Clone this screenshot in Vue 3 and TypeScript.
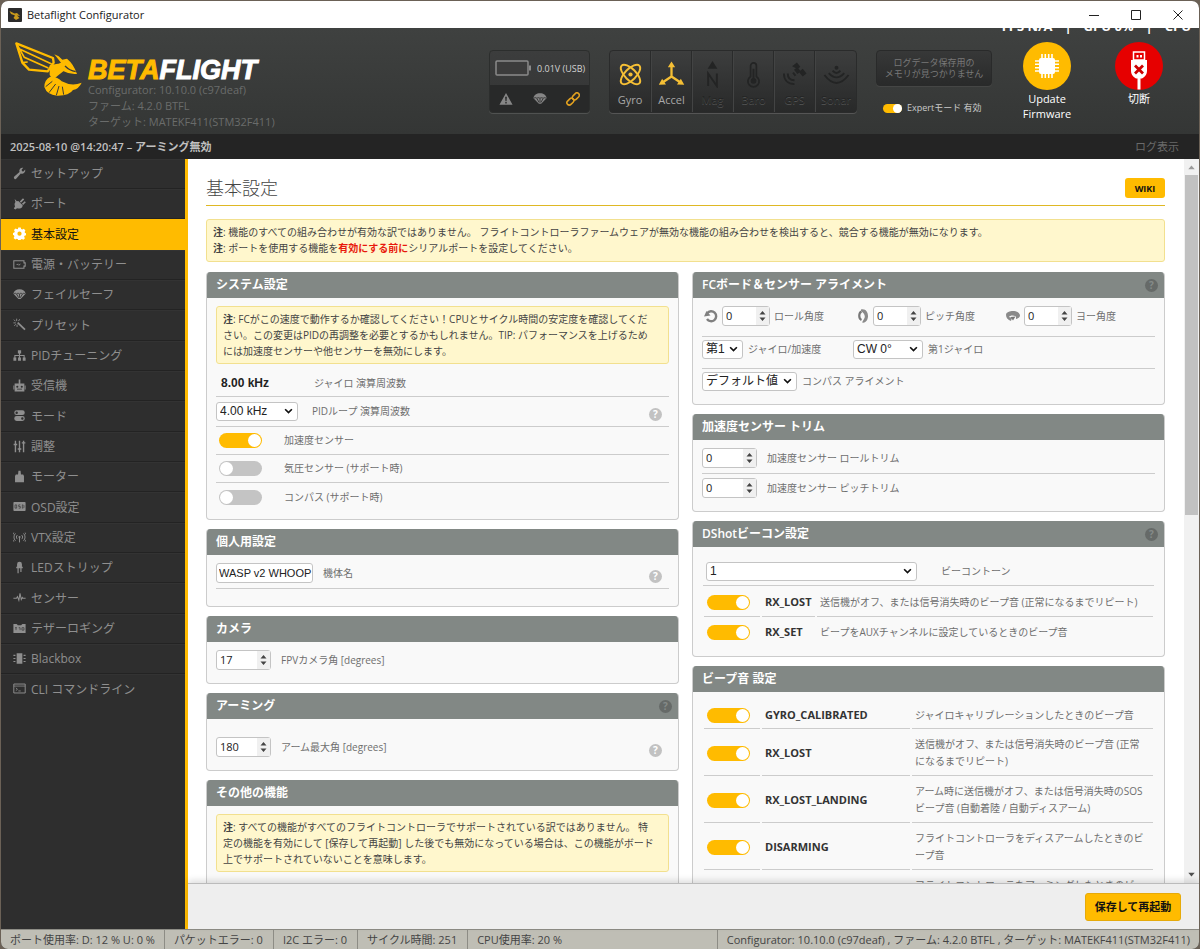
<script setup lang="ts">
import { ref } from 'vue'

interface NavItem { icon: string; label: string }
interface Sensor { icon: string; label: string; on: boolean }
interface Beeper { name: string; text: string }

const icons: Record<string, string> = {
  wrench: '<path d="M15 3.2a4 4 0 0 1-5.400 4.700L4.200 14.300a1.700 1.700 0 0 1-2.600-2.500L8 6.300A4 4 0 0 1 12.600 1L10.600 3.400l.5 1.700 1.700.4z"/>',
  plug: '<path d="M2 2.500l2.800 2.700 1.700-.4 5.500 5.200-.6 2.200c-1.600 2.200-4.400 2.600-6.400 1.500L3 15.500 1 14l1.600-2.500C1.500 9.500 1.800 7.500 3 6z"/><path d="M8.300 5.600l4-4 1.500 1.400-4 4zM11 8.300l3.400-3.200 1.400 1.500-3.400 3.200z"/>',
  gear: '<path fill-rule="evenodd" d="M6.500.5h3l.5 2 1.500.6L13.300 2l2 2.200-1 1.800.5 1.300 1.200.3v2.600l-1.800.5-.5 1.300 1 1.800-2 2-1.800-1-1.300.5-.6 1.700H6.500L6 15l-1.400-.5-1.800 1-2.100-2 1-1.900-.5-1.300-1.200-.4V7.300l1.600-.5.6-1.300-1-1.700 2-2 1.800 1L6 2.500zM8 5.600a2.600 2.600 0 1 0 0 5.200 2.600 2.600 0 0 0 0-5.200z"/>',
  battery: '<path d="M1 3.500h12.500v2.500h1.500v4h-1.500v2.500H1z" fill="none" stroke="currentColor" stroke-width="1.300"/><path d="M3.500 8.700l3-2v1.500l3.500-1.500-3 3V8.400z"/>',
  chute: '<path d="M.5 7C1 3.600 4 1.500 8 1.500S15 3.600 15.500 7L9.300 13.500H6.700z"/><path d="M4.500 7.500L7 12M8 7.500V12M11.500 7.500L9 12M1 7.200c1.200-1 2.500-1 3.500.2 1-1.200 2.300-1.200 3.500 0 1-1.200 2.500-1.200 3.500 0 1-1.200 2.500-1.200 3.500 0" fill="none" stroke="#2e2e2e" stroke-width="1"/>',
  wand: '<path d="M6.500 5L15.500 13.500 14 15 5 6.600z"/><path d="M4.500.8v3M8.200 1.500L6.800 3.800M1 2l2 2M.5 6h3M1.500 9.500l2-1.700M5 11V8" fill="none" stroke="currentColor" stroke-width="1.100"/>',
  tree: '<path d="M6 1.500h4v4H6zM.5 10.500H4v4H.500zM6.200 10.500h3.600v4H6.200zM12 10.500h3.500v4H12z"/><path d="M8 5v6M2.300 11V8h11.400v3" fill="none" stroke="currentColor" stroke-width="1.300"/>',
  radio: '<path fill-rule="evenodd" d="M2 5.500h5V.500h2v5h5v10H2zM4 9.500a1.300 1.300 0 1 0 2.600 0 1.300 1.300 0 0 0-2.600 0zm5.500 0a1.300 1.300 0 1 0 2.600 0 1.300 1.300 0 0 0-2.600 0zM5 13h6v-1H5zM.5 8H1.500v5H.500zM14.500 8h1v5h-1z"/>',
  modes: '<path fill-rule="evenodd" d="M4.500 1.500h7a3 3 0 0 1 0 6h-7a3 3 0 0 1 0-6zm0 1.500a1.500 1.500 0 1 0 0 3 1.500 1.500 0 0 0 0-3zM4.500 8.700h7a3 3 0 0 1 0 6h-7a3 3 0 0 1 0-6zm7 1.500a1.500 1.500 0 1 0 0 3 1.500 1.500 0 0 0 0-3z"/>',
  sliders: '<path d="M3 1v14M8 1v14M13 1v14M.8 5.500h4.400M5.800 11h4.400M10.800 3.500h4.400" fill="none" stroke="currentColor" stroke-width="1.700"/>',
  motor: '<path d="M6.700 1h2.600l.5 4.500h2.700l1 2V15h-11V7.500l1-2h2.700z"/>',
  osd: '<path d="M1.500 2.500h13a1 1 0 0 1 1 1v9a1 1 0 0 1-1 1h-13a1 1 0 0 1-1-1v-9a1 1 0 0 1 1-1z"/><path d="M2.500 6h2v4h-2zM9 6H7v2h2v2H7M11.500 6h1l1 1v2l-1 1h-1z" fill="none" stroke="#2e2e2e" stroke-width=".8"/>',
  vtx: '<circle cx="8" cy="7.500" r="1.300"/><path d="M8 8v6M5.500 10a3 3 0 0 1 0-5M10.500 10a3 3 0 0 0 0-5M3 12a6.500 6.500 0 0 1 0-9M13 12a6.500 6.500 0 0 0 0-9M1 13a9 9 0 0 1 0-11M15 13a9 9 0 0 0 0-11" fill="none" stroke="currentColor" stroke-width="1.200"/>',
  led: '<path d="M5 7V4a3 3 0 0 1 6 0v3h1v2H4V7zM5.500 9H7v6H5.500zM9 9h1.500v4.500H9z"/>',
  pulse: '<path d="M.5 9h3.700l1.300-2 1.700 4.500L8.600 3l1.600 7.500L11.500 8l.8 1h3.200" fill="none" stroke="currentColor" stroke-width="1.300"/>',
  tether: '<path d="M.5 2.500h4L6 4h4l1.500-1.500h4v11H.500z"/><path d="M2.500 7h2.300M3.700 7v3M7 7h1.700v3M11 7h2.500v3H11z" fill="none" stroke="#2e2e2e" stroke-width=".8"/>',
  chip: '<path d="M4.500 1.500h7v13h-7zM.5 3.500H3v1.400H.500zM.5 7.300H3v1.400H.500zM.5 11H3v1.400H.500zM13 3.500h2.500v1.400H13zM13 7.300h2.500v1.400H13zM13 11h2.500v1.400H13z"/>',
  cli: '<path d="M1 2.500h14v11H1z" fill="none" stroke="currentColor" stroke-width="1.200"/><path d="M1 5h14M3.500 7.200L5.500 9l-2 1.600M6.500 11h3" fill="none" stroke="currentColor" stroke-width="1"/>',
}

const sensorIcons: Record<string, string> = {
  gyro: '<g fill="none" stroke="currentColor" stroke-width="2"><ellipse cx="14" cy="14" rx="13" ry="5.800" transform="rotate(45 14 14)"/><ellipse cx="14" cy="14" rx="13" ry="5.800" transform="rotate(-45 14 14)"/></g><circle cx="14" cy="14" r="2.200"/>',
  accel: '<path d="M14 5v11M14 16L5 22M14 16l9 6" fill="none" stroke="currentColor" stroke-width="2.400"/><path d="M14 .5l3.800 6h-7.600zM.8 24.500l3.500-6 4 5.800zM27.200 24.500l-3.500-6-4 5.800z"/>',
  mag: '<path d="M14 0l5 8H9z"/><path d="M9.500 26V13l9 13V13" fill="none" stroke="currentColor" stroke-width="2"/>',
  baro: '<path d="M11 16V5a3 3 0 0 1 6 0v11a5.800 5.800 0 1 1-6 0z" fill="none" stroke="currentColor" stroke-width="1.800"/><circle cx="14" cy="20.500" r="3"/><path d="M13 8h2v12h-2z"/>',
  gps: '<path d="M11.500 5.500l5-4 3.500 4.500-2 1.700L20 10l2.500-2 4 5-4 3-3.500-4-2 1.600-3.500-4.500L15.500 7.500z"/><path d="M12.500 12l2.500 3.300M3 13c0 7 4.500 11 11 11M7 13c0 4.500 2.500 7 7 7" fill="none" stroke="currentColor" stroke-width="2"/>',
  sonar: '<path d="M1.500 14.500Q14 31 26.500 14.500M6 12.500q8 9 16 0M10 10q4 5 8 0" fill="none" stroke="currentColor" stroke-width="2"/><circle cx="14" cy="7" r="2"/>',
}

const nav: NavItem[] = [
  { icon: 'wrench', label: 'セットアップ' },
  { icon: 'plug', label: 'ポート' },
  { icon: 'gear', label: '基本設定' },
  { icon: 'battery', label: '電源・バッテリー' },
  { icon: 'chute', label: 'フェイルセーフ' },
  { icon: 'wand', label: 'プリセット' },
  { icon: 'tree', label: 'PIDチューニング' },
  { icon: 'radio', label: '受信機' },
  { icon: 'modes', label: 'モード' },
  { icon: 'sliders', label: '調整' },
  { icon: 'motor', label: 'モーター' },
  { icon: 'osd', label: 'OSD設定' },
  { icon: 'vtx', label: 'VTX設定' },
  { icon: 'led', label: 'LEDストリップ' },
  { icon: 'pulse', label: 'センサー' },
  { icon: 'tether', label: 'テザーロギング' },
  { icon: 'chip', label: 'Blackbox' },
  { icon: 'cli', label: 'CLI コマンドライン' },
]
const active = ref(2)

const sensors: Sensor[] = [
  { icon: 'gyro', label: 'Gyro', on: true },
  { icon: 'accel', label: 'Accel', on: true },
  { icon: 'mag', label: 'Mag', on: false },
  { icon: 'baro', label: 'Baro', on: false },
  { icon: 'gps', label: 'GPS', on: false },
  { icon: 'sonar', label: 'Sonar', on: false },
]

const expert = ref(true)
const features = ref([
  { id: 'acc', label: '加速度センサー', on: true },
  { id: 'baro', label: '気圧センサー (サポート時)', on: false },
  { id: 'mag', label: 'コンパス (サポート時)', on: false },
])
const craftName = ref('WASP v2 WHOOP')
const cameraAngle = ref(17)
const armAngle = ref(180)
const axes = ref([
  { id: 'roll', label: 'ロール角度', value: 0 },
  { id: 'pitch', label: 'ピッチ角度', value: 0 },
  { id: 'yaw', label: 'ヨー角度', value: 0 },
])
const trims = ref([
  { id: 'trim-roll', label: '加速度センサー ロールトリム', value: 0 },
  { id: 'trim-pitch', label: '加速度センサー ピッチトリム', value: 0 },
])
const dshot: Beeper[] = [
  { name: 'RX_LOST', text: '送信機がオフ、または信号消失時のビープ音 (正常になるまでリピート)' },
  { name: 'RX_SET', text: 'ビープをAUXチャンネルに設定しているときのビープ音' },
]
const beepers: Beeper[] = [
  { name: 'GYRO_CALIBRATED', text: 'ジャイロキャリブレーションしたときのビープ音' },
  { name: 'RX_LOST', text: '送信機がオフ、または信号消失時のビープ音 (正常になるまでリピート)' },
  { name: 'RX_LOST_LANDING', text: 'アーム時に送信機がオフ、または信号消失時のSOSビープ音 (自動着陸 / 自動ディスアーム)' },
  { name: 'DISARMING', text: 'フライトコントローラをディスアームしたときのビープ音' },
  { name: 'ARMING', text: 'フライトコントローラをアーミングしたときのビープ音' },
]
const stats = ['ポート使用率: D: 12 % U: 0 %', 'パケットエラー: 0', 'I2C エラー: 0', 'サイクル時間: 251', 'CPU使用率: 20 %']
</script>

<template>
  <div class="desktop">
    <div class="window">
      <header class="titlebar">
        <svg class="app-icon" viewBox="0 0 14 14"><rect width="14" height="14" rx="1" fill="#2b2b2b" /><path d="M1.500 3l5 2.500L9 5l3 3-3-.5 2.500 2.500L8 12l-2.500-2L7 7.500 3 6z" fill="#c99a1c" /></svg>
        <span class="app-title">Betaflight Configurator</span>
        <div class="win-buttons">
          <button aria-label="最小化"><svg viewBox="0 0 10 10"><path d="M0 5.500h10" /></svg></button>
          <button aria-label="最大化"><svg viewBox="0 0 10 10"><path d="M.5 .5h9v9h-9z" /></svg></button>
          <button aria-label="閉じる"><svg viewBox="0 0 10 10"><path d="M.5 .5l9 9M9.500 .5l-9 9" /></svg></button>
        </div>
      </header>

      <section class="topbar">
        <div class="overlay" aria-hidden="true"><span>FPS N/A</span><span>|</span><span>GPU 0%</span><span>|</span><span>CPU</span></div>
        <div class="brand">
          <svg class="bee" viewBox="0 0 210 165" fill="none">
            <path d="M4 4L22 62 42 83 98 88 116 62 114 48z" stroke="#ffbb00" stroke-width="7" stroke-linejoin="round" />
            <path d="M4 4L28 46 100 78M22 62l16-2M12 20L110 66" stroke="#ffbb00" stroke-width="5" />
            <path d="M104 70l24-5 14 10 4 12-18 14-14 12-10-14z" fill="#ffbb00" />
            <path d="M118 37q14 4 24 16l14-3q20 16 30 46-22 2-40-8-14-6-18-22l10-4z" fill="#ffbb00" />
            <path d="M150 72q14 14 32 17" stroke="#393b3a" stroke-width="4" />
            <path d="M106 104q24 0 34 14 30 16 60 4-8 18-26 22-12 18-48 17-30-2-38-26 0-22 18-31z" fill="#ffbb00" />
            <path d="M112 118l-20 16M122 126l-20 26M132 132l-8 28M142 134l4 24" stroke="#393b3a" stroke-width="3" />
          </svg>
          <div class="brand-text">
            <div class="wordmark"><span>BETA</span>FLIGHT</div>
            <div>Configurator: 10.10.0 (c97deaf)</div>
            <div>ファーム: 4.2.0 BTFL</div>
            <div>ターゲット: MATEKF411(STM32F411)</div>
          </div>
        </div>

        <div class="battery-box">
          <div class="battery-top">
            <svg viewBox="0 0 37 16" class="batt"><rect x="1" y="1" width="32" height="14" rx="1" fill="#3c3c3c" stroke="#8a8a8a" stroke-width="1.500" /><path d="M34 5.500h2v5h-2z" fill="#8a8a8a" /></svg>
            <span>0.01V (USB)</span>
          </div>
          <div class="battery-bottom">
            <svg viewBox="0 0 16 16" fill="#868686"><path fill-rule="evenodd" d="M8 1l7.500 13.500H.500zM7 5.500l.4 5h1.200l.4-5zM7.200 11.500V13h1.600v-1.500z" /></svg>
            <svg viewBox="0 0 16 16" class="grey" v-html="icons.chute"></svg>
            <svg viewBox="0 0 16 16" fill="none" stroke="#e0a020" stroke-width="1.800"><rect x="7" y="2.600" width="9" height="5.400" rx="2.700" transform="rotate(-45 11 5.500)" /><rect x="0.500" y="8.300" width="9" height="5.400" rx="2.700" transform="rotate(-45 5 11)" /></svg>
          </div>
        </div>

        <div class="sensors">
          <div v-for="s in sensors" :key="s.label" class="sensor" :class="{ on: s.on }">
            <svg viewBox="0 0 28 28" v-html="sensorIcons[s.icon]"></svg>
            <span>{{ s.label }}</span>
          </div>
        </div>

        <div class="flash">
          <div class="flash-box">ログデータ保存用の<br>メモリが見つかりません</div>
          <div class="expert">
            <input id="expert" v-model="expert" type="checkbox" class="toggle small">
            <label for="expert">Expertモード 有効</label>
          </div>
        </div>

        <div class="connect">
          <button class="round">
            <svg viewBox="0 0 48 48"><circle cx="24" cy="24" r="24" fill="#ffbb00" /><rect x="16" y="16" width="16" height="16" rx="2" fill="#fff" /><path d="M19 12v24M22.300 12v24M25.700 12v24M29 12v24M12 19h24M12 22.300h24M12 25.700h24M12 29h24" stroke="#fff" stroke-width="1.600" /></svg>
            <span>Update<br>Firmware</span>
          </button>
          <button class="round">
            <svg viewBox="0 0 48 48"><circle cx="24" cy="24" r="24" fill="#e60000" /><path d="M18.500 10h11v8h-11z" fill="#e60000" stroke="#fff" stroke-width="1.500" /><path d="M21.500 13h2v2.500h-2zM25 13h2v2.500h-2z" fill="#fff" /><path d="M16 18h16v11q0 5-5 7.500h-1.500V47.500h-3V36.500H21q-5-2.500-5-7.500z" fill="#fff" /><path d="M20 23.500l8 8M28 23.500l-8 8" stroke="#c00" stroke-width="2.800" /></svg>
            <span>切断</span>
          </button>
        </div>
      </section>

      <div class="logbar">
        <div>2025-08-10 @14:20:47 – <b>アーミング無効</b></div>
        <button>ログ表示</button>
      </div>

      <div class="main">
        <nav>
          <a v-for="(item, i) in nav" :key="item.label" href="#" :class="{ active: i === active }" @click.prevent="active = i">
            <svg viewBox="0 0 16 16" v-html="icons[item.icon]"></svg>
            <span>{{ item.label }}</span>
          </a>
        </nav>

        <div class="page">
          <div class="scroll-row">
            <div class="content">
              <div class="page-head">
                <h1>基本設定</h1>
                <button class="wiki">WIKI</button>
              </div>
              <div class="note">
                <div><b>注</b>: 機能のすべての組み合わせが有効な訳ではありません。 フライトコントローラファームウェアが無効な機能の組み合わせを検出すると、競合する機能が無効になります。</div>
                <div><b>注</b>: ポートを使用する機能を<strong>有効にする前に</strong>シリアルポートを設定してください。</div>
              </div>

              <div class="columns">
                <div class="column">
                  <section class="panel">
                    <h2>システム設定</h2>
                    <div class="body system">
                      <div class="note"><b>注</b>: FCがこの速度で動作するか確認してください！CPUとサイクル時間の安定度を確認してください。この変更はPIDの再調整を必要とするかもしれません。TIP: パフォーマンスを上げるためには加速度センサーや他センサーを無効にします。</div>
                      <div class="row gyro-row"><span class="freq">8.00 kHz</span><span>ジャイロ 演算周波数</span></div>
                      <div class="row pid-row">
                        <span class="select w82"><select id="pid"><option>4.00 kHz</option></select><svg viewBox="0 0 8 6"><path d="M1 1l3 3 3-3" /></svg></span>
                        <label for="pid">PIDループ 演算周波数</label>
                        <span class="help">?</span>
                      </div>
                      <div v-for="f in features" :key="f.id" class="row feature">
                        <input :id="f.id" v-model="f.on" type="checkbox" class="toggle">
                        <label :for="f.id">{{ f.label }}</label>
                      </div>
                    </div>
                  </section>

                  <section class="panel">
                    <h2>個人用設定</h2>
                    <div class="body personal">
                      <div class="row lined">
                        <input id="craft" v-model="craftName" type="text" class="text">
                        <label for="craft">機体名</label>
                        <span class="help">?</span>
                      </div>
                    </div>
                  </section>

                  <section class="panel">
                    <h2>カメラ</h2>
                    <div class="body plain">
                      <div class="row">
                        <span class="number"><input id="cam" v-model="cameraAngle" type="number"><svg viewBox="0 0 8 12"><path d="M4 1l3 3.500H1zM4 11l3-3.500H1z" /></svg></span>
                        <label for="cam">FPVカメラ角 [degrees]</label>
                      </div>
                    </div>
                  </section>

                  <section class="panel">
                    <h2>アーミング<span class="help dark">?</span></h2>
                    <div class="body plain arming">
                      <div class="row">
                        <span class="number"><input id="arm" v-model="armAngle" type="number"><svg viewBox="0 0 8 12"><path d="M4 1l3 3.500H1zM4 11l3-3.500H1z" /></svg></span>
                        <label for="arm">アーム最大角 [degrees]</label>
                        <span class="help">?</span>
                      </div>
                    </div>
                  </section>

                  <section class="panel">
                    <h2>その他の機能</h2>
                    <div class="body plain">
                      <div class="note"><b>注</b>: すべての機能がすべてのフライトコントローラでサポートされている訳ではありません。 特定の機能を有効にして [保存して再起動] した後でも無効になっている場合は、この機能がボード上でサポートされていないことを意味します。</div>
                      <div class="spacer"></div>
                    </div>
                  </section>
                </div>

                <div class="column">
                  <section class="panel">
                    <h2>FCボード＆センサー アライメント<span class="help dark">?</span></h2>
                    <div class="body plain">
                      <div class="thirds axes">
                        <div v-for="a in axes" :key="a.id" class="cell">
                          <svg v-if="a.id === 'roll'" class="axis" viewBox="0 0 14 14"><path d="M3.200 4.200A5 5 0 1 1 3 10" fill="none" stroke="#808080" stroke-width="2.400" /><path d="M0 7.500L2.500 2l4 4.500z" fill="#808080" /></svg>
                          <svg v-else-if="a.id === 'pitch'" class="axis" viewBox="0 0 14 14"><path d="M6 .5c5-1 7 3 7 6.500s-2 7.500-6 6.500l2-3.500c2-3 0-6-3-8z" fill="#8a8a8a" /><path d="M6.500 2.500C3.500 4 3.500 9.500 6.500 11" fill="none" stroke="#777" stroke-width="2.200" /></svg>
                          <svg v-else class="axis" viewBox="0 0 14 14"><path d="M0 6c0-3 4-4 7-4s7 1.500 7 4.500c0 2-2 3-4 3.500V7.500C7 6 4 6.500 3 8l3 1-1 3C2 11 0 9 0 6z" fill="#8a8a8a" /><path d="M4.500 8l5-.5-2.500 4z" fill="#777" /></svg>
                          <span class="number narrow"><input :id="a.id" v-model="a.value" type="number"><svg viewBox="0 0 8 12"><path d="M4 1l3 3.500H1zM4 11l3-3.500H1z" /></svg></span>
                          <label :for="a.id">{{ a.label }}</label>
                        </div>
                      </div>
                      <div class="thirds gyros">
                        <div class="cell">
                          <span class="select w41"><select id="gyro-src"><option>第1</option></select><svg viewBox="0 0 8 6"><path d="M1 1l3 3 3-3" /></svg></span>
                          <label for="gyro-src">ジャイロ/加速度</label>
                        </div>
                        <div class="cell">
                          <span class="select w70"><select id="gyro-cw"><option>CW 0°</option></select><svg viewBox="0 0 8 6"><path d="M1 1l3 3 3-3" /></svg></span>
                          <label for="gyro-cw">第1ジャイロ</label>
                        </div>
                      </div>
                      <div class="compass cell">
                        <span class="select w95"><select id="mag-align"><option>デフォルト値</option></select><svg viewBox="0 0 8 6"><path d="M1 1l3 3 3-3" /></svg></span>
                        <label for="mag-align">コンパス アライメント</label>
                      </div>
                    </div>
                  </section>

                  <section class="panel">
                    <h2>加速度センサー トリム</h2>
                    <div class="body plain trims">
                      <div v-for="t in trims" :key="t.id" class="row">
                        <span class="number"><input :id="t.id" v-model="t.value" type="number"><svg viewBox="0 0 8 12"><path d="M4 1l3 3.500H1zM4 11l3-3.500H1z" /></svg></span>
                        <label :for="t.id">{{ t.label }}</label>
                      </div>
                    </div>
                  </section>

                  <section class="panel">
                    <h2>DShotビーコン設定<span class="help dark">?</span></h2>
                    <div class="body beeps">
                      <div class="tone">
                        <span class="select w211"><select id="tone"><option>1</option></select><svg viewBox="0 0 8 6"><path d="M1 1l3 3 3-3" /></svg></span>
                        <label for="tone">ビーコントーン</label>
                      </div>
                      <table class="dshot">
                        <tbody>
                          <tr v-for="b in dshot" :key="b.name">
                            <td class="c1"><input :id="'d-' + b.name" type="checkbox" class="toggle" checked></td>
                            <td class="c2"><label :for="'d-' + b.name">{{ b.name }}</label></td>
                            <td>{{ b.text }}</td>
                          </tr>
                        </tbody>
                      </table>
                    </div>
                  </section>

                  <section class="panel">
                    <h2>ビープ音 設定</h2>
                    <div class="body beeps">
                      <table class="beepers">
                        <tbody>
                          <tr v-for="b in beepers" :key="b.name">
                            <td class="c1"><input :id="'b-' + b.name" type="checkbox" class="toggle" checked></td>
                            <td class="c2"><label :for="'b-' + b.name">{{ b.name }}</label></td>
                            <td class="c3">{{ b.text }}</td>
                          </tr>
                        </tbody>
                      </table>
                    </div>
                  </section>
                </div>
              </div>
            </div>
            <div class="scrollbar" aria-hidden="true">
              <svg viewBox="0 0 14 14"><path d="M4 9l3-3.500L10 9z" fill="#9a9a9a" /></svg>
              <div class="thumb"></div>
              <svg viewBox="0 0 14 14"><path d="M4 5l3 3.500L10 5z" fill="#505050" /></svg>
            </div>
          </div>
          <div class="toolbar"><button>保存して再起動</button></div>
        </div>
      </div>

      <footer>
        <span v-for="s in stats" :key="s" class="stat">{{ s }}</span>
        <span class="version">Configurator: 10.10.0 (c97deaf) , ファーム: 4.2.0 BTFL , ターゲット: MATEKF411(STM32F411)</span>
      </footer>
    </div>
  </div>
</template>

<style>
body { margin: 0; }
</style>

<style scoped>
* { box-sizing: border-box; }
.desktop { height: 100vh; padding: 1px 1px 0; background: #6b6156; font-family: "Open Sans", "Noto Sans CJK JP", sans-serif; }
.window { height: 100%; display: flex; flex-direction: column; border-radius: 7px; overflow: hidden; background: #2e2e2e; }
button { border: 0; padding: 0; background: none; font-family: inherit; cursor: pointer; }
svg { display: block; }
svg:not([fill]) { fill: currentColor; }

.titlebar { flex: none; height: 27px; display: flex; align-items: center; padding-left: 7px; background: #fff; color: #222; }
.app-icon { width: 14px; height: 14px; }
.app-title { margin-left: 5px; font-size: 11px; }
.win-buttons { margin-left: auto; display: flex; }
.win-buttons button { width: 42px; height: 27px; display: grid; place-items: center; }
.win-buttons svg { width: 10px; height: 10px; fill: none; stroke: #222; stroke-width: 1; }

.topbar { position: relative; flex: none; height: 106px; display: flex; align-items: flex-start; padding: 14px 14px 0 14px; background: linear-gradient(#3f4140, #343635); overflow: hidden; }
.overlay { position: absolute; top: -11px; right: 8px; display: flex; gap: 12px; color: #fff; font-size: 13px; line-height: 18px; font-weight: 700; }
.brand { display: flex; margin-right: auto; }
.bee { width: 70px; height: 55px; }
.brand-text { margin: 15px 0 0 3px; color: #6a6c6b; font-size: 11px; line-height: 16px; white-space: nowrap; }
.wordmark { height: 25px; color: #fff; font: italic 700 27px/26px "Liberation Sans", sans-serif; -webkit-text-stroke: 1px currentColor; }
.wordmark span { color: #ffbb00; }

.battery-box { width: 101px; height: 63px; margin: 8px 19px 0 0; border: 1px solid #2c2e2d; border-radius: 4px; overflow: hidden; box-shadow: 0 1px 0 #505251; background: linear-gradient(#3c3d3d, #333434); }
.battery-top { height: 34px; display: flex; align-items: center; padding-left: 5px; gap: 5px; color: #d2d2d2; font-size: 9px; white-space: nowrap; }
.batt { width: 37px; height: 16px; }
.battery-bottom { height: 28px; display: flex; align-items: center; justify-content: space-between; padding: 0 9px; background: #282929; }
.battery-bottom svg { width: 14px; height: 14px; }
.grey { color: #868686; }

.sensors { width: 248px; height: 63px; margin: 8px 19px 0 0; display: grid; grid-template-columns: repeat(6, 1fr); border: 1px solid #2a2b2b; border-radius: 4px; box-shadow: 0 1px 0 #555; background: linear-gradient(#3d3e3e, #282929); }
.sensor { display: flex; flex-direction: column; align-items: center; padding-top: 10px; border-right: 1px solid #2a2b2b; border-left: 1px solid #434444; color: #232424; font-size: 11px; line-height: 16px; }
.sensor svg { width: 27px; height: 27px; margin-bottom: 4px; }
.sensor span { text-shadow: 0 1px 0 #525353; }
.sensor:first-child { border-left: 0; }
.sensor:last-child { border-right: 0; }
.sensor.on span { color: #a8a8a8; text-shadow: none; }
.sensor.on svg { color: #f5bf35; }

.flash { width: 116px; margin: 8px 9px 0 0; }
.flash-box { height: 36px; padding-top: 6px; border: 1px solid #292a2a; border-radius: 4px; background: linear-gradient(#373838, #292a2a); box-shadow: 0 1px 0 #454645; color: #787878; font-size: 9px; line-height: 11px; text-align: center; white-space: nowrap; }
.expert { display: flex; align-items: center; gap: 5px; margin: 14px 0 0 7px; color: #c9c9c9; font-size: 9px; line-height: 16px; white-space: nowrap; }
.connect { display: flex; align-items: flex-start; }
.round { width: 92px; color: #fff; font-size: 11px; line-height: 15px; }
.round svg { width: 48px; height: 48px; margin: 0 auto; }
.round span { display: block; padding-top: 1px; }

.logbar { flex: none; height: 25px; display: flex; justify-content: space-between; align-items: center; padding: 0 20px 2px 9px; background: #242424; color: #c0c0c0; font-size: 11px; font-weight: 600; }
.logbar b { font-weight: 700; }
.logbar button { color: #6a6a6a; font-size: 11px; }

.main { flex: 1; min-height: 0; display: flex; }
nav { flex: none; width: 187px; border-right: 3px solid #ffbb00; background: #2e2e2e; }
nav a { display: flex; align-items: center; gap: 5px; height: 30px; padding: 0 0 2px 12px; border-top: 1px solid #333; border-bottom: 1px solid #232323; color: #8f8f8f; font-size: 12px; text-decoration: none; white-space: nowrap; }
nav a:nth-child(3n) { height: 31px; }
nav a:last-child { border-bottom-color: transparent; }
nav svg { width: 13px; height: 13px; }
nav a.active { background: #ffbb00; border-color: #ffbb00; color: #111; }
nav a.active svg { color: #fff; }

.page { flex: 1; min-width: 0; display: flex; flex-direction: column; background: #fff; }
.scroll-row { flex: 1; min-height: 0; display: flex; }
.content { flex: 1; min-width: 0; overflow-y: auto; scrollbar-width: none; padding: 19px 19px 0 18px; }
.scrollbar { flex: none; width: 15px; display: flex; flex-direction: column; background: #f1f1f1; }
.scrollbar svg { width: 15px; height: 16px; }
.thumb { width: 13px; height: 47%; margin: 0 auto auto; background: #c1c1c1; }

.page-head { display: flex; align-items: center; justify-content: space-between; margin-bottom: 13px; padding-bottom: 7px; border-bottom: 1px solid #dfb824; }
h1 { margin: 0; color: #444; font-size: 18px; line-height: 20px; font-weight: 300; }
.wiki { width: 40px; height: 20px; border-radius: 3px; background: #ffbb00; color: #111; font-size: 9px; font-weight: 700; }
.note { padding: 4px 6px 5px; border: 1px solid #f2e08f; border-radius: 3px; background: #fff7cd; color: #444; font-size: 10px; line-height: 16px; }
.note strong { color: #e8180c; }
.columns { display: grid; grid-template-columns: 1fr 1fr; gap: 13px; align-items: start; margin-top: 10px; }
.column { display: grid; gap: 9px; min-width: 0; }

.panel { border: 1px solid #ccc; border-top: 0; border-radius: 4px; background: #f9f9f9; color: #6e6e6e; font-size: 10px; overflow: hidden; }
.panel label { padding-bottom: 2px; }
h2 { display: flex; align-items: center; justify-content: space-between; height: 26px; margin: 0 -1px; padding: 0 7px 0 10px; background: #828885; color: #fff; font-size: 12px; line-height: 26px; font-weight: 600; }
.body { padding: 8px 9px 0; }
.body .note { height: 58px; padding: 4px 13px 4px 6px; }
.help { flex: none; width: 13px; height: 13px; border-radius: 50%; background: #c2c2c2; color: #fff; font-size: 10px; line-height: 13px; font-weight: 700; text-align: center; }
.row .help { margin: 6px 7px 0 auto; }
.help.dark { background: #666a68; color: #858a88; }
.row { display: flex; align-items: center; gap: 10px; }

.system { padding-bottom: 8px; }
.system .note { margin-bottom: 5px; }
.system .row { height: 28px; border-bottom: 1px solid #ccc; }
.system .row:last-child { border-bottom: 0; }
.system .pid-row { height: 30px; gap: 14px; }
.system .gyro-row { gap: 0; padding-left: 5px; }
.freq { width: 93px; color: #222; font: 700 12px "Liberation Sans", sans-serif; }
.feature { padding-left: 3px; }
.system .feature { gap: 22px; }
.personal { padding-bottom: 17px; }
.lined { height: 26px; padding-bottom: 5px; border-bottom: 1px solid #ccc; }
.plain { padding-bottom: 13px; }
.arming { padding-top: 18px; }
.spacer { height: 80px; }

.toggle { appearance: none; flex: none; position: relative; display: block; width: 43px; height: 15px; margin: 0; border-radius: 8px; background: #c4c4c4; cursor: pointer; }
.toggle::before { content: ""; position: absolute; top: 1px; left: 1px; width: 13px; height: 13px; border-radius: 50%; background: #fff; }
.toggle:checked { background: #ffbb00; }
.toggle:checked::before { left: auto; right: 1px; }
.toggle.small { width: 19px; height: 9px; }
.toggle.small::before { top: 0; right: 0; width: 9px; height: 9px; }

.select, .number { position: relative; flex: none; display: block; }
select, .text, .number input { appearance: none; width: 100%; margin: 0; border: 1px solid #c4c4c4; border-radius: 3px; background: #fff; color: #222; font-family: "Liberation Sans", "Noto Sans CJK JP", sans-serif; }
select { display: block; height: 19px; padding: 0 3px; font-size: 12px; line-height: 17px; }
.select svg { position: absolute; right: 5px; top: 6px; width: 9px; height: 7px; fill: none; stroke: #111; stroke-width: 1.5; pointer-events: none; }
.w41 { width: 41px; }
.w70 { width: 70px; }
.w82 { width: 82px; }
.w95 { width: 95px; }
.w211 { width: 211px; }
.text { width: 97px; height: 20px; padding: 0 0 0 2px; font-size: 11px; }
.number { width: 55px; }
.number.narrow { width: 48px; }
.number input { display: block; height: 20px; padding: 0 15px 1px 3px; font: 11px "Open Sans", sans-serif; -moz-appearance: textfield; }
.number input::-webkit-inner-spin-button { appearance: none; margin: 0; }
.number svg { position: absolute; right: 1px; top: 1px; width: 13px; height: 18px; padding: 3px 2px; background: #f0f0f0; color: #444; pointer-events: none; }

.thirds { display: grid; grid-template-columns: repeat(3, 1fr); border-bottom: 1px solid #ccc; }
.cell { display: flex; align-items: center; gap: 5px; white-space: nowrap; }
.axes { padding-bottom: 10px; }
.axes .cell { gap: 4px; padding-left: 2px; }
.axis { width: 14px; height: 14px; }
.gyros { padding: 3px 0 9px; }
.compass { padding-top: 3px; }
.trims .row + .row { margin-top: 5px; padding-top: 4px; border-top: 1px solid #ccc; }

.tone { display: flex; align-items: center; gap: 24px; margin: 0 1px; padding: 7px 0 4px 3px; border-bottom: 1px solid #ccc; }
.beeps { padding-bottom: 8px; }
table { width: 100%; table-layout: fixed; border-spacing: 2px; }
td { height: 29px; padding: 0 3px; border-bottom: 1px solid #ccc; line-height: 17px; vertical-align: middle; }
td label { display: block; }
.c1 { width: 56px; }
.c2 { color: #333; font-size: 11px; font-weight: 700; }
.c3 { padding-right: 8px; }
.dshot .c2 { width: 53px; }
.dshot td { white-space: nowrap; }
.dshot tr:last-child td { height: 27px; border-bottom: 0; }
.beepers .c2 { width: 148px; }
.beepers td { height: 45px; }
.beepers tr:first-child td { height: 27px; }

.toolbar { flex: none; position: relative; height: 46px; display: flex; align-items: center; justify-content: flex-end; padding-right: 18px; border-top: 1px solid #bbb; background: #eee; box-shadow: 0 -3px 6px rgba(0, 0, 0, .12); }
.toolbar button { width: 96px; height: 28px; padding-bottom: 2px; border: 1px solid #e6aa0a; border-radius: 3px; background: #ffbb00; color: #111; font-size: 11px; font-weight: 700; }

footer { flex: none; height: 20px; display: flex; border-top: 1px solid #8d8c85; background: #bfbeb5; color: #444; font-size: 11px; line-height: 19px; white-space: nowrap; }
.stat { padding: 0 9px; border-right: 1px solid #8d8c85; }
.stat + .stat { padding: 0 10px 0 9px; }
.stat:nth-child(5) { border-right: 0; }
.version { margin-left: auto; padding: 0 9px; border-left: 1px solid #8d8c85; }
</style>
